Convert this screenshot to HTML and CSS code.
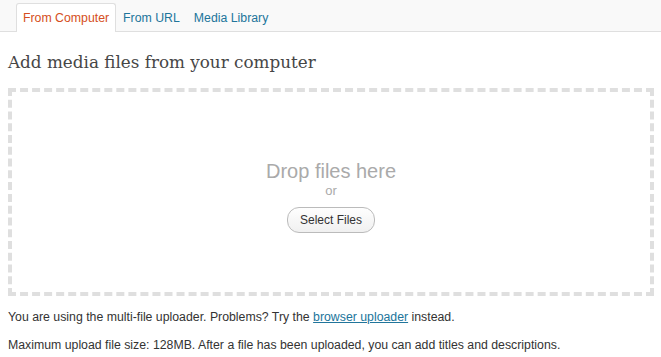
FILE: index.html
```html
<!DOCTYPE html>
<html>
<head>
<meta charset="utf-8">
<link rel="stylesheet" href="styles.css">
</head>
<body>
<div class="tabbar">
  <ul class="tabs">
    <li class="tab active"><a href="#">From Computer</a></li>
    <li class="tab"><a href="#">From URL</a></li>
    <li class="tab"><a href="#">Media Library</a></li>
  </ul>
</div>
<div class="content">
  <h3 class="media-title">Add media files from your computer</h3>
  <div class="drop-area">
    <div class="drop-inner">
      <p class="drag-info">Drop files here</p>
      <p class="or">or</p>
      <button class="select-btn" type="button">Select Files</button>
    </div>
  </div>
  <p class="note">You are using the multi-file uploader. Problems? Try the <a href="#">browser uploader</a> instead.</p>
  <p class="note">Maximum upload file size: 128MB. After a file has been uploaded, you can add titles and descriptions.</p>
</div>
</body>
</html>
```

FILE: styles.css
```css
html, body {
  margin: 0;
  padding: 0;
  background: #fff;
}
body {
  font-family: "Liberation Sans", Arial, sans-serif;
  font-size: 12.3px;
  color: #333;
}
.tabbar {
  background: #f9f9f9;
  border-bottom: 1px solid #dfdfdf;
  height: 31px;
  padding-left: 16px;
}
.tabs {
  list-style: none;
  margin: 0;
  padding: 3px 0 0;
  display: flex;
  height: 28px;
}
.tab {
  height: 28px;
  box-sizing: border-box;
  border: 1px solid transparent;
  border-bottom: none;
  border-radius: 3px 3px 0 0;
}
.tab a {
  display: block;
  padding: 0 6px;
  line-height: 28px;
  font-size: 12.3px;
  color: #21759b;
  text-decoration: none;
}
.tab.active {
  background: #fff;
  border-color: #dfdfdf;
  height: 29px;
  margin-bottom: -1px;
}
.tab.active a {
  color: #d54e21;
}
.content {
  padding: 0 7px 0 8px;
}
.media-title {
  font-family: Georgia, "DejaVu Serif", serif;
  font-weight: normal;
  font-size: 16.8px;
  color: #464646;
  margin: 0;
  padding-top: 17px;
  height: 39px;
  line-height: 26px;
}
.drop-area {
  border: 4px dashed #dfdfdf;
  height: 200px;
  display: flex;
  align-items: center;
  justify-content: center;
}
.drop-inner {
  display: flex;
  flex-direction: column;
  align-items: center;
  padding-top: 8px;
}
.drag-info {
  margin: 0;
  font-size: 20px;
  line-height: 24px;
  color: #aaa;
}
.or {
  margin: 0;
  font-size: 13px;
  line-height: 16px;
  color: #aaa;
}
.select-btn {
  margin-top: 8px;
  font-family: "Liberation Sans", Arial, sans-serif;
  font-size: 12px;
  color: #333;
  height: 26px;
  padding: 0 12px;
  border: 1px solid #bbb;
  border-radius: 12px;
  background: linear-gradient(#fefefe, #f0f0f0);
}
.note {
  margin: 14px 0 0;
  line-height: 15px;
}
.note + .note {
  margin-top: 13px;
}
.note a {
  color: #21759b;
}
```
